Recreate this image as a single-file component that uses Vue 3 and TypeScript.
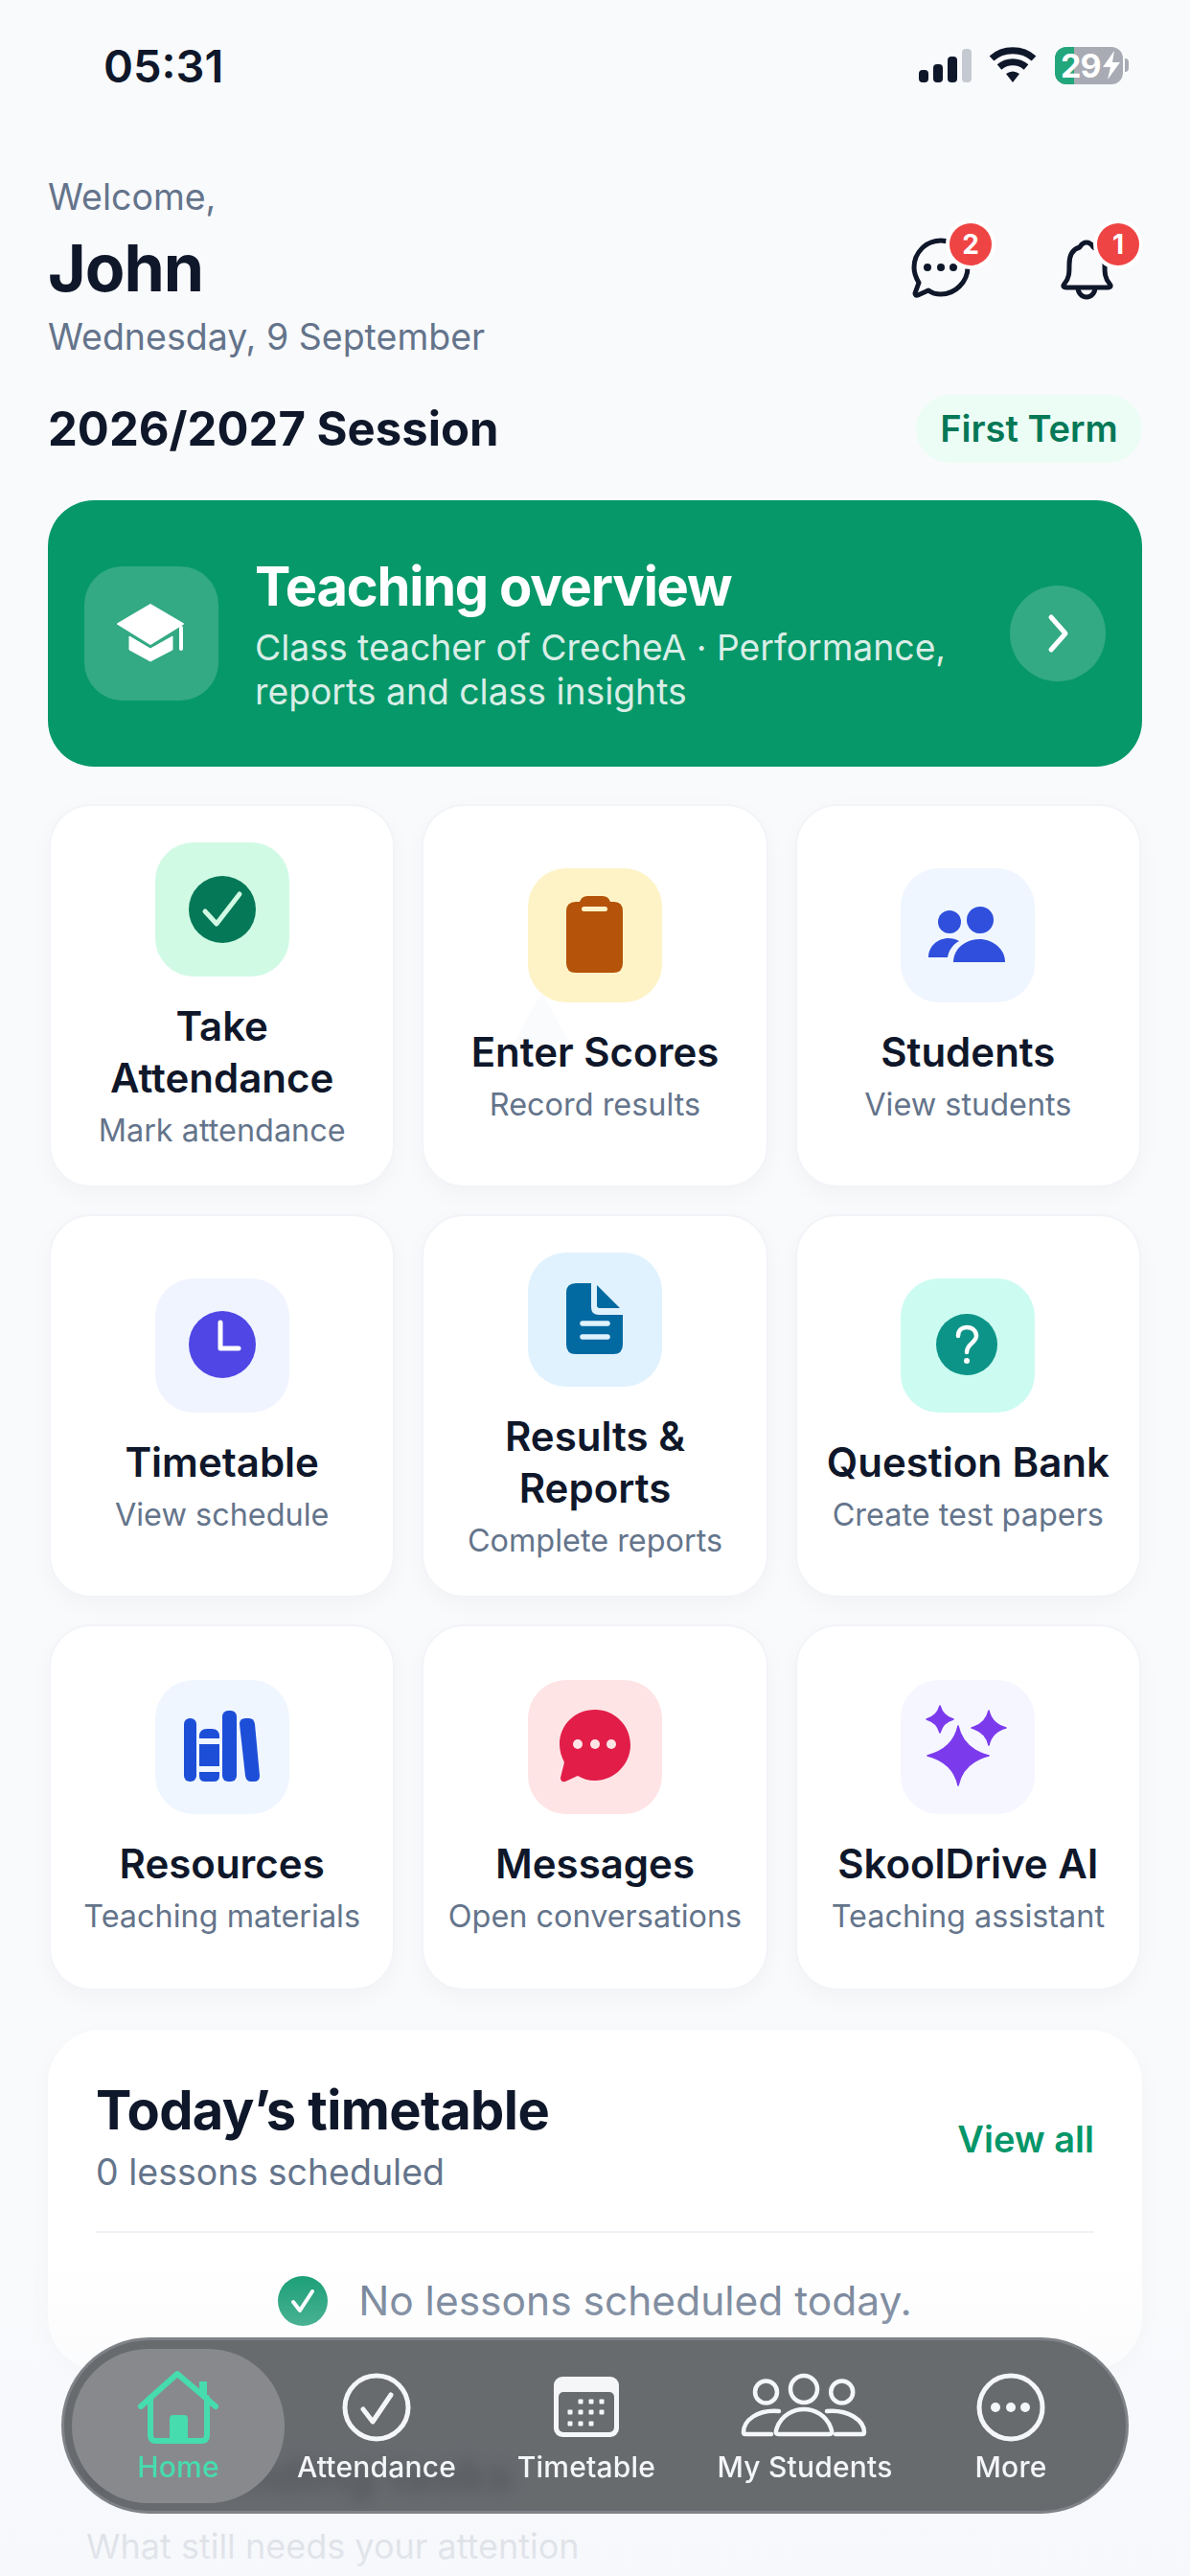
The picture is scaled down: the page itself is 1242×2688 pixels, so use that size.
<script setup lang="ts">
interface Tile {
  title: string[]
  sub: string
  icon: string
  bg: string
}

const tiles: Tile[] = [
  { title: ['Take', 'Attendance'], sub: 'Mark attendance', icon: 'check', bg: '#d1fae5' },
  { title: ['Enter Scores'], sub: 'Record results', icon: 'clipboard', bg: '#fef3c7' },
  { title: ['Students'], sub: 'View students', icon: 'people', bg: '#eff6ff' },
  { title: ['Timetable'], sub: 'View schedule', icon: 'clock', bg: '#f0f4ff' },
  { title: ['Results &', 'Reports'], sub: 'Complete reports', icon: 'doc', bg: '#e0f2fe' },
  { title: ['Question Bank'], sub: 'Create test papers', icon: 'question', bg: '#ccfbf1' },
  { title: ['Resources'], sub: 'Teaching materials', icon: 'books', bg: '#eff6ff' },
  { title: ['Messages'], sub: 'Open conversations', icon: 'chat', bg: '#ffe4e6' },
  { title: ['SkoolDrive AI'], sub: 'Teaching assistant', icon: 'spark', bg: '#f5f6ff' },
]

const calendarDots = [
  [34, 34], [45, 34], [56, 34],
  [23, 45], [34, 45], [45, 45], [56, 45],
  [23, 57], [34, 57], [45, 57],
]
</script>

<template>
  <div class="screen">
    <div class="status">
      <span class="time">05:31</span>
      <div class="status-icons">
        <div class="signal">
          <i style="height: 13px"></i>
          <i style="height: 19px"></i>
          <i style="height: 27px"></i>
          <i class="off" style="height: 35px"></i>
        </div>
        <svg class="wifi" width="50" height="38" viewBox="0 0 50 38" fill="none" stroke="#0f172a" stroke-width="7">
          <path d="M3 12 C15 1 35 1 47 12" />
          <path d="M11 21 C19 14 31 14 39 21" />
          <path d="M18 28 Q25 23 32 28 L25 37 Z" fill="#0f172a" stroke="none" />
        </svg>
        <div class="battery">
          <div class="battery-fill"></div>
          <span class="battery-text">29</span>
          <svg class="bolt" width="20" height="30" viewBox="0 0 20 30"><path d="M13 0 L1 17 H9 L6 30 L19 12 H11 Z" fill="#fff" /></svg>
        </div>
        <div class="battery-nub"></div>
      </div>
    </div>

    <main class="content">
      <header class="greeting">
        <div>
          <div class="welcome">Welcome,</div>
          <h1 class="name">John</h1>
          <div class="date">Wednesday, 9 September</div>
        </div>
        <div class="actions">
          <div class="action">
            <svg width="80" height="80" viewBox="0 0 80 80" fill="none" stroke="#0f172a" stroke-width="5" stroke-linejoin="round">
              <path d="M37 5 C21 5 9 18 9 33 C9 39 11 44 14 49 L10 60 Q10 63 13 62 L24 57 C28 60 32 61 37 61 C52 61 65 48 65 33 C65 18 52 5 37 5 Z" />
              <g fill="#0f172a" stroke="none">
                <circle cx="23" cy="33" r="4" />
                <circle cx="37" cy="33" r="4" />
                <circle cx="50" cy="33" r="4" />
              </g>
            </svg>
            <span class="badge badge-chat">2</span>
          </div>
          <div class="action">
            <svg width="80" height="80" viewBox="0 0 80 80" fill="none" stroke="#0f172a" stroke-width="5" stroke-linejoin="round">
              <path d="M40 7 C36 7 34 10 33 12 C25 14 22 21 22 30 C22 39 22 44 17 50 Q14 54 19 54 H62 Q67 54 64 50 C59 44 59 39 59 30 C59 21 55 14 47 12 C46 10 44 7 40 7 Z" />
              <path d="M31 54 a9 10 0 0 0 18 0" />
            </svg>
            <span class="badge badge-bell">1</span>
          </div>
        </div>
      </header>

      <div class="session">
        <span class="session-name">2026/2027 Session</span>
        <span class="term">First Term</span>
      </div>

      <section class="overview">
        <div class="overview-icon">
          <svg width="140" height="140" viewBox="0 0 140 140" fill="#fff">
            <path d="M69 40 L103 60 L69 81 L35 60 Z" stroke="#fff" stroke-width="2" stroke-linejoin="round" />
            <path d="M47 73 L69 86 L92 73 V87 L69 99 L47 87 Z" stroke="#fff" stroke-width="1" stroke-linejoin="round" />
            <rect x="99" y="62" width="4" height="26" rx="2" />
          </svg>
        </div>
        <div class="overview-text">
          <h2>Teaching overview</h2>
          <p>Class teacher of CrecheA · Performance, reports and class insights</p>
        </div>
        <div class="overview-go">
          <svg width="40" height="50" viewBox="0 0 40 50" fill="none" stroke="#fff" stroke-width="5" stroke-linecap="round" stroke-linejoin="round">
            <path d="M13 8 L28 25 L13 42" />
          </svg>
        </div>
      </section>

      <section class="tiles">
        <article v-for="t in tiles" :key="t.icon" class="tile">
          <div v-if="t.icon === 'clipboard'" class="ghost"></div>
          <div class="tile-icon" :style="{ background: t.bg }">
            <svg width="140" height="140" viewBox="0 0 140 140">
              <template v-if="t.icon === 'check'">
                <circle cx="70" cy="70" r="35" fill="#047857" />
                <path d="M52 72 L64 85 L88 54" fill="none" stroke="#d1fae5" stroke-width="5" stroke-linecap="round" stroke-linejoin="round" />
              </template>
              <template v-else-if="t.icon === 'clipboard'">
                <path d="M54 35 Q56 29 62 29 H78 Q84 29 86 35 H90 Q99 35 99 45 V99 Q99 109 89 109 H50 Q40 109 40 99 V45 Q40 35 50 35 Z" fill="#b45309" />
                <rect x="56" y="40" width="27" height="5" rx="2.5" fill="#fef3c7" />
              </template>
              <template v-else-if="t.icon === 'people'">
                <g fill="#2f4fdc">
                  <ellipse cx="83" cy="54" rx="14" ry="14" />
                  <ellipse cx="51" cy="56" rx="12" ry="12" />
                  <path d="M55 98 C55 84 68 74 82 74 C96 74 109 84 109 98 Z" />
                  <path d="M29 93 C29 82 38 73 50 73 C54 73 58 74 61 76 C54 80 50 86 49 93 Z" />
                </g>
              </template>
              <template v-else-if="t.icon === 'clock'">
                <circle cx="70" cy="69" r="35" fill="#4f46e5" />
                <path d="M68 46 V73 H87" fill="none" stroke="#fff" stroke-width="5" stroke-linecap="round" stroke-linejoin="round" />
              </template>
              <template v-else-if="t.icon === 'doc'">
                <path d="M50 32 H66 V57 Q66 65 74 65 H99 V96 Q99 106 89 106 H50 Q40 106 40 96 V42 Q40 32 50 32 Z" fill="#0369a1" />
                <path d="M72 34 L96 58 H75 Q72 58 72 55 Z" fill="#0369a1" />
                <path d="M57 74 H83 M57 88 H83" stroke="#e0f2fe" stroke-width="5.5" stroke-linecap="round" />
              </template>
              <template v-else-if="t.icon === 'question'">
                <circle cx="69" cy="69" r="32" fill="#0d9488" />
                <path d="M60 60 C60 54 64 51 69 51 C75 51 79 55 79 60 C79 67 69 68 69 77" fill="none" stroke="#fff" stroke-width="4.5" stroke-linecap="round" />
                <circle cx="69" cy="86" r="3" fill="#fff" />
              </template>
              <template v-else-if="t.icon === 'books'">
                <g fill="#1d4ed8">
                  <rect x="30" y="40" width="13" height="66" rx="6" />
                  <path d="M46 59 Q46 51 54 51 H59 Q67 51 67 59 V61 H46 Z M46 67 H67 V90 H46 Z M46 96 H67 V100 Q67 106 61 106 H52 Q46 106 46 100 Z" />
                  <rect x="70" y="32" width="15" height="74" rx="6" />
                  <path d="M88 46 Q88 40 94 40 H98 Q103 40 104 46 L109 100 Q109 106 103 106 H100 Q95 106 94 100 Z" />
                </g>
              </template>
              <template v-else-if="t.icon === 'chat'">
                <path d="M70 31 C49 31 33 47 33 67 C33 74 35 80 38 86 L34 102 Q34 107 39 106 L52 100 C57 103 63 105 70 105 C90 105 107 88 107 68 C107 47 90 31 70 31 Z" fill="#e11d48" />
                <g fill="#ffe4e6">
                  <circle cx="52" cy="67" r="5" />
                  <circle cx="70" cy="67" r="5" />
                  <circle cx="87" cy="67" r="5" />
                </g>
              </template>
              <template v-else-if="t.icon === 'spark'">
                <g fill="#7c3aed" stroke="#7c3aed" stroke-width="1.5" stroke-linejoin="round">
                  <path d="M60 48 Q65 72 92 79 Q65 86 60 110 Q55 86 28 79 Q55 72 60 48 Z" />
                  <path d="M41 27 Q44 38 55 41 Q44 44 41 55 Q38 44 27 41 Q38 38 41 27 Z" />
                  <path d="M92 32 Q95 46 110 50 Q95 54 92 68 Q89 54 74 50 Q89 46 92 32 Z" />
                </g>
              </template>
            </svg>
          </div>
          <h3 class="tile-title">
            <span v-for="line in t.title" :key="line">{{ line }}</span>
          </h3>
          <p class="tile-sub">{{ t.sub }}</p>
        </article>
      </section>

      <section class="today">
        <div class="today-head">
          <div>
            <h2>Today’s timetable</h2>
            <p>0 lessons scheduled</p>
          </div>
          <a class="view-all">View all</a>
        </div>
        <div class="today-empty">
          <svg width="52" height="52" viewBox="0 0 52 52">
            <circle cx="26" cy="26" r="26" fill="#059669" />
            <path d="M16 27 L23 36 L36 16" fill="none" stroke="#fff" stroke-width="4" stroke-linecap="round" stroke-linejoin="round" />
          </svg>
          <span>No lessons scheduled today.</span>
        </div>
      </section>

      <section class="attention">
        <h2>Outstanding tasks</h2>
        <p>What still needs your attention</p>
      </section>
    </main>

    <div class="fade"></div>

    <nav class="tabbar">
      <div class="tab tab-active">
        <svg width="90" height="80" viewBox="0 0 90 80" fill="none" stroke="#46dcae" stroke-width="6" stroke-linecap="round" stroke-linejoin="round">
          <path d="M6 39 L44 5 L84 39" />
          <path d="M16 30 V69 Q16 75 22 75 H69 Q75 75 75 69 V30" />
          <path d="M36 75 V52 Q36 48 40 48 H51 Q55 48 55 52 V75 Z" fill="#46dcae" stroke="none" />
          <path d="M67 26 V13 H75 V33 Z" fill="#46dcae" stroke="none" />
        </svg>
        <span>Home</span>
      </div>
      <div class="tab">
        <svg width="80" height="80" viewBox="0 0 80 80" fill="none" stroke="#f5f6f8" stroke-width="5" stroke-linecap="round" stroke-linejoin="round">
          <circle cx="40" cy="40" r="33" />
          <path d="M26 42 L36 55 L55 27" />
        </svg>
        <span>Attendance</span>
      </div>
      <div class="tab">
        <svg width="80" height="80" viewBox="0 0 80 80">
          <rect x="6" y="8" width="68" height="63" rx="9" fill="#f5f6f8" />
          <rect x="11" y="24" width="58" height="42" rx="5" fill="#696c6f" />
          <rect v-for="(d, i) in calendarDots" :key="i" :x="d[0] - 2.5" :y="d[1] - 2.5" width="5" height="5" rx="1" fill="#f5f6f8" />
        </svg>
        <span>Timetable</span>
      </div>
      <div class="tab">
        <svg width="140" height="80" viewBox="0 0 140 80" fill="none" stroke="#f5f6f8" stroke-width="4.5" stroke-linecap="round" stroke-linejoin="round">
          <g transform="translate(0 4)">
            <circle cx="29.5" cy="20" r="11.5" />
            <circle cx="69" cy="17" r="14" />
            <circle cx="108.7" cy="20" r="11.5" />
            <path d="M43 64 C38 64 40 60 41 57 C46 44 58 38 69 38 C80 38 92 44 97 57 C98 60 100 64 95 64 Z" />
            <path d="M43 40 C20 38 6 50 6 62 Q6 64 8 64 H35" />
            <path d="M93 40 C116 38 132 50 132 62 Q132 64 130 64 H102" />
          </g>
        </svg>
        <span>My Students</span>
      </div>
      <div class="tab">
        <svg width="80" height="80" viewBox="0 0 80 80" fill="none" stroke="#f5f6f8" stroke-width="5">
          <circle cx="40" cy="40" r="33" />
          <g fill="#f5f6f8" stroke="none">
            <circle cx="24" cy="40" r="5" />
            <circle cx="40" cy="40" r="5" />
            <circle cx="55" cy="40" r="5" />
          </g>
        </svg>
        <span>More</span>
      </div>
    </nav>
  </div>
</template>

<style>
html,
body {
  margin: 0;
  background: #f9fafc;
}
</style>

<style scoped>
.screen {
  position: relative;
  width: 1242px;
  height: 2688px;
  overflow: hidden;
  background: #f9fafc;
  color: #0f172a;
  font-family: Inter, "Noto Sans", sans-serif;
}

h1, h2, h3, p {
  margin: 0;
}

.status {
  height: 136px;
  display: flex;
  align-items: center;
  justify-content: space-between;
  padding: 0 64px 0 108px;
}

.time {
  font-size: 47px;
  font-weight: 600;
}

.status-icons {
  display: flex;
  align-items: center;
}

.signal {
  display: flex;
  align-items: flex-end;
  gap: 5px;
  height: 35px;
  margin-right: 18px;
}

.signal i {
  width: 10px;
  border-radius: 4px;
  background: #0f172a;
}

.signal i.off {
  background: #c5c9d1;
}

.wifi {
  margin-right: 19px;
}

.battery {
  position: relative;
  width: 71px;
  height: 39px;
  border-radius: 12px;
  overflow: hidden;
  background: #a8abb4;
  display: flex;
  align-items: center;
  color: #fff;
}

.battery-fill {
  position: absolute;
  left: 0;
  top: 0;
  bottom: 0;
  width: 20px;
  background: #22a67c;
}

.battery-text {
  position: relative;
  margin-left: 6px;
  font-size: 34px;
  font-weight: 700;
  letter-spacing: -1px;
}

.bolt {
  position: relative;
  margin-left: 1px;
}

.battery-nub {
  width: 4px;
  height: 14px;
  margin-left: 2px;
  border-radius: 0 4px 4px 0;
  background: #a8abb4;
}

.content {
  padding: 45px 50px 0;
}

.greeting {
  display: flex;
  justify-content: space-between;
  align-items: center;
}

.welcome,
.date {
  font-size: 37.5px;
  line-height: 50px;
  color: #64748b;
}

.name {
  font-size: 68px;
  line-height: 96px;
  font-weight: 700;
  letter-spacing: -1px;
}

.actions {
  display: flex;
  gap: 69px;
  padding: 13px 18px 0 0;
}

.action {
  position: relative;
  width: 80px;
  height: 80px;
}

.badge {
  position: absolute;
  top: -13px;
  width: 44px;
  height: 44px;
  border-radius: 50%;
  background: #ef4444;
  box-shadow: 0 0 0 4px #fff;
  color: #fff;
  font-size: 28px;
  font-weight: 700;
  line-height: 44px;
  text-align: center;
}

.badge-chat {
  left: 46px;
}

.badge-bell {
  left: 51px;
}

.session {
  display: flex;
  justify-content: space-between;
  align-items: center;
  margin-top: 35px;
}

.session-name {
  font-size: 49px;
  font-weight: 700;
}

.term {
  width: 236px;
  height: 71px;
  border-radius: 36px;
  background: #ecfdf5;
  color: #047857;
  font-size: 38px;
  font-weight: 600;
  line-height: 71px;
  text-align: center;
}

.overview {
  display: flex;
  align-items: center;
  height: 278px;
  margin-top: 39px;
  padding: 0 38px;
  border-radius: 48px;
  background: #079869;
  color: #fff;
}

.overview-icon {
  flex: none;
  width: 140px;
  height: 140px;
  border-radius: 40px;
  background: rgba(255, 255, 255, 0.18);
}

.overview-text {
  flex: 1;
  margin-left: 38px;
  padding-top: 2px;
}

.overview-text h2 {
  font-size: 56px;
  line-height: 66px;
  font-weight: 700;
  letter-spacing: -1.2px;
}

.overview-text p {
  width: 770px;
  margin-top: 8px;
  font-size: 37.3px;
  line-height: 46px;
  color: rgba(255, 255, 255, 0.85);
}

.overview-go {
  flex: none;
  display: flex;
  align-items: center;
  justify-content: center;
  width: 100px;
  height: 100px;
  border-radius: 50%;
  background: rgba(255, 255, 255, 0.18);
}

.tiles {
  display: grid;
  grid-template-columns: repeat(3, 1fr);
  gap: 28px;
  margin-top: 39px;
  padding: 0 1px;
}

.tile {
  position: relative;
  display: flex;
  flex-direction: column;
  align-items: center;
  justify-content: center;
  box-sizing: border-box;
  min-height: 382px;
  padding: 38px 10px 35px;
  border: 2px solid #f2f4f8;
  border-radius: 44px;
  background: #fff;
  box-shadow: 0 8px 24px rgba(15, 23, 42, 0.03);
}

.ghost {
  position: absolute;
  left: 92px;
  top: 195px;
  width: 62px;
  height: 55px;
  background: #fafbfd;
  clip-path: polygon(50% 0, 100% 100%, 0 100%);
}

.tile-icon {
  position: relative;
  width: 140px;
  height: 140px;
  border-radius: 40px;
}

.tile-icon svg {
  display: block;
}

.tile-title {
  position: relative;
  display: flex;
  flex-direction: column;
  align-items: center;
  margin-top: 25px;
  font-size: 42px;
  line-height: 54px;
  font-weight: 600;
  white-space: nowrap;
}

.tile-sub {
  margin-top: 6px;
  font-size: 32.4px;
  line-height: 44px;
  color: #64748b;
  white-space: nowrap;
}

.today {
  margin-top: 41px;
  padding: 54px 50px 47px;
  border-radius: 56px;
  background: #fff;
  box-shadow: 0 8px 24px rgba(15, 23, 42, 0.03);
}

.today-head {
  display: flex;
  justify-content: space-between;
  align-items: center;
  padding-bottom: 37px;
  border-bottom: 2px solid #eef1f5;
}

.today-head h2 {
  font-size: 56px;
  line-height: 60px;
  font-weight: 700;
  letter-spacing: -0.6px;
}

.today-head p {
  margin-top: 11px;
  font-size: 37.5px;
  line-height: 48px;
  color: #64748b;
}

.view-all {
  color: #059669;
  font-size: 38px;
  font-weight: 600;
}

.today-empty {
  display: flex;
  justify-content: center;
  align-items: center;
  gap: 32px;
  margin-top: 45px;
  font-size: 42.5px;
  line-height: 52px;
  color: #64748b;
}

.attention {
  margin-top: 78px;
  padding-left: 40px;
}

.attention h2 {
  position: relative;
  z-index: 1;
  font-size: 50px;
  line-height: 60px;
  font-weight: 700;
  color: #475569;
}

.attention p {
  margin-top: 22px;
  font-size: 36px;
  line-height: 46px;
  color: #64748b;
}

.fade {
  position: absolute;
  left: 0;
  right: 0;
  bottom: 0;
  height: 340px;
  background: linear-gradient(to bottom, rgba(247, 248, 251, 0), rgba(247, 248, 251, 0.72) 60%, rgba(247, 248, 251, 0.88));
  pointer-events: none;
}

.tabbar {
  position: absolute;
  z-index: 2;
  left: 64px;
  top: 2439px;
  display: grid;
  grid-template-columns: 222px 192px 246px 210px 220px;
  align-items: center;
  box-sizing: border-box;
  width: 1114px;
  height: 184px;
  padding: 0 8px;
  border: 3px solid #7f8287;
  border-radius: 92px;
  background: rgba(88, 91, 94, 0.9);
  backdrop-filter: blur(8px);
  color: #f5f6f8;
}

.tab {
  display: flex;
  flex-direction: column;
  align-items: center;
  justify-content: center;
  height: 161px;
  box-sizing: border-box;
  font-size: 30px;
  font-weight: 500;
  letter-spacing: 0.2px;
  line-height: 38px;
  white-space: nowrap;
}

.tab svg {
  display: block;
  margin: 3px 0;
}

.tab-active {
  border-radius: 80px;
  background: #88898d;
  color: #46dcae;
}
</style>
